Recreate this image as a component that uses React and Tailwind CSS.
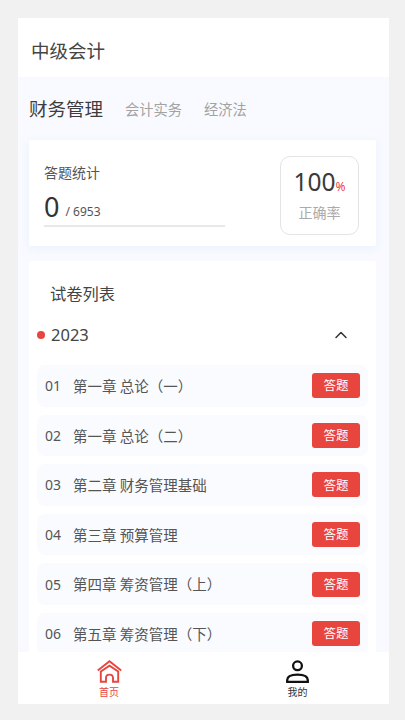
import React from "react";
import { ChevronUp } from "lucide-react";

const papers = [
  { no: "01", title: "第一章 总论（一）" },
  { no: "02", title: "第一章 总论（二）" },
  { no: "03", title: "第二章 财务管理基础" },
  { no: "04", title: "第三章 预算管理" },
  { no: "05", title: "第四章 筹资管理（上）" },
  { no: "06", title: "第五章 筹资管理（下）" },
];

const HomeIcon = () => (
  <svg width="25" height="23" viewBox="0 0 25 23" fill="none" stroke="#e8453f" strokeWidth="1.9">
    <path d="M0.8 10.5 L12.5 1.2 L24.2 10.5" />
    <path d="M3.8 11.5 L12.5 5.6 L21.2 11.5 V21.8 H16 V18 Q16 14.6 12.5 14.6 Q9 14.6 9 18 V21.8 H3.8 Z" />
  </svg>
);

const UserIcon = () => (
  <svg width="23" height="23" viewBox="0 0 23 23" fill="none" stroke="#111" strokeWidth="2.3">
    <circle cx="11.5" cy="5.8" r="4.4" />
    <path d="M1.2 21.8 V20 Q1.2 14.6 11.5 14.6 Q21.8 14.6 21.8 20 V21.8 Z" />
  </svg>
);

export default function App() {
  return (
    <div className="h-[720px] bg-[#f1f1f1] py-[18px] pl-[18px] pr-[16px] font-['Noto_Sans_CJK_SC','Noto_Sans',sans-serif]">
      <div className="flex h-[686px] flex-col overflow-hidden bg-white">
        <div className="flex h-[59px] shrink-0 items-center pl-[13px] pt-[7px] text-[18.5px] text-[#444]">中级会计</div>

        <div className="flex min-h-0 flex-1 flex-col bg-[#f8faff] pl-[11px] pr-[13px]">
          <div className="flex h-[63px] shrink-0 items-center">
            <span className="text-[18.5px] text-[#3d3d3d]">财务管理</span>
            <span className="ml-[22px] text-[14.25px] text-[#a3a3a3]">会计实务</span>
            <span className="ml-[22px] text-[14.25px] text-[#a3a3a3]">经济法</span>
          </div>

          <div className="flex h-[106px] shrink-0 items-start justify-between rounded-[2px] bg-white pl-[15px] pr-[17px] shadow-[0_2px_8px_rgba(225,235,250,0.6)]">
            <div className="mt-[22px] w-[181px]">
              <div className="text-[14px] leading-[20px] text-[#555]">答题统计</div>
              <div className="mt-[10px] flex h-[30px] items-end">
                <span className="font-['Noto_Sans'] text-[27px] leading-[30px] text-[#333]">0</span>
                <span className="mb-[1px] ml-[6px] font-['Noto_Sans'] text-[12px] leading-[18px] text-[#555]">/ 6953</span>
              </div>
              <div className="mt-[3px] h-[2px] bg-[#e8e8e8]" />
            </div>
            <div className="mt-[16px] flex h-[79px] w-[79px] flex-col items-center justify-center rounded-[10px] border border-[#e4e4e4] pb-[3px]">
              <div className="flex items-end leading-[30px]">
                <span className="font-['Noto_Sans'] text-[24.5px] text-[#3a3a3a]">100</span>
                <span className="mb-[3px] font-['Noto_Sans'] text-[12px] leading-[14px] text-[#e8453f]">%</span>
              </div>
              <div className="mt-[5px] text-[14px] leading-[20px] text-[#aaa]">正确率</div>
            </div>
          </div>

          <div className="mt-[15px] min-h-0 flex-1 overflow-hidden rounded-t-[2px] bg-white px-[8px]">
            <div className="flex h-[44px] items-end pl-[13px] text-[16.25px] leading-[24px] text-[#444]">试卷列表</div>
            <div className="flex h-[60px] items-center justify-between pr-[17px]">
              <div className="flex items-center">
                <span className="h-[8px] w-[8px] rounded-full bg-[#e8453f]" />
                <span className="ml-[6px] font-['Noto_Sans'] text-[16.5px] text-[#444]">2023</span>
              </div>
              <ChevronUp className="h-[20px] w-[20px] text-[#333]" strokeWidth={1.8} />
            </div>
            <div className="flex flex-col gap-[8px]">
              {papers.map((p) => (
                <div key={p.no} className="flex h-[41.6px] shrink-0 items-center justify-between rounded-[8px] bg-[#f9fbff] px-[8px]">
                  <div className="flex items-center text-[14.5px] text-[#555]">
                    <span className="w-[28px] font-['Noto_Sans'] text-[14px]">{p.no}</span>
                    <span>{p.title}</span>
                  </div>
                  <button className="flex h-[25px] w-[48px] items-center justify-center rounded-[3px] bg-[#e8453f] text-[12.5px] text-white">答题</button>
                </div>
              ))}
            </div>
          </div>
        </div>

        <div className="flex h-[52px] shrink-0 bg-white">
          <div className="flex w-[182px] flex-col items-center pt-[8px]">
            <HomeIcon />
            <span className="mt-[2px] text-[10px] leading-[14px] text-[#e8453f]">首页</span>
          </div>
          <div className="flex flex-1 flex-col items-center pl-[6px] pt-[8px]">
            <UserIcon />
            <span className="mt-[2px] text-[10px] leading-[14px] text-[#333]">我的</span>
          </div>
        </div>
      </div>
    </div>
  );
}
